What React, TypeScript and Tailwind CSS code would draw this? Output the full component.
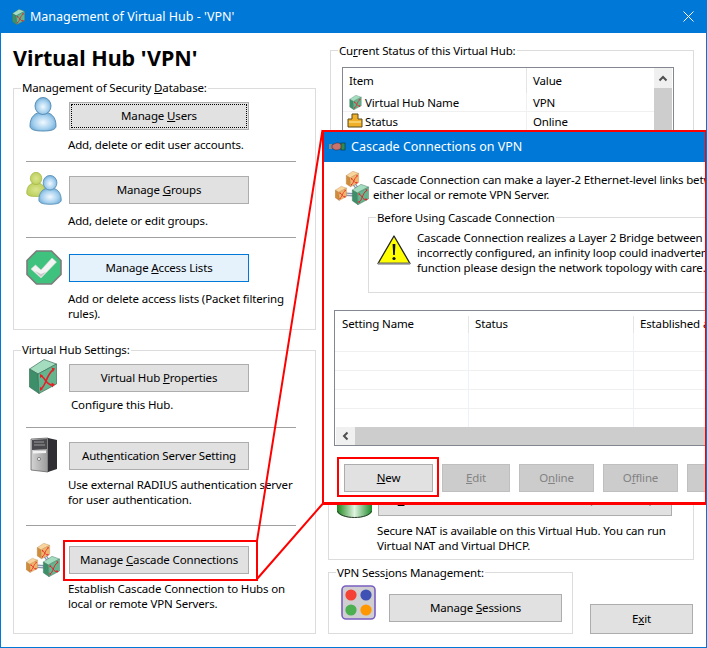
import type { ReactNode } from "react";

function PersonShape({ x = 0, y = 0, s = 1, tone }: { x?: number; y?: number; s?: number; tone: string }) {
  return (
    <g transform={`translate(${x} ${y}) scale(${s})`} fill={`url(#${tone})`} stroke={tone === "pBlue" ? "#5b8fb5" : "#a3b544"} strokeWidth="1">
      <path d="M1 29C1 20 6 15 14 15C22 15 27 20 27 29C27 33 21 34 14 34C7 34 1 33 1 29Z" />
      <ellipse cx="14" cy="9" rx="8" ry="8.5" />
    </g>
  );
}

function PersonDefs() {
  return (
    <defs>
      <radialGradient id="pBlue" cx="50%" cy="55%" r="60%">
        <stop offset="0" stopColor="#f2f9ff" />
        <stop offset="0.6" stopColor="#a5d0ee" />
        <stop offset="1" stopColor="#62a3d3" />
      </radialGradient>
      <radialGradient id="pGreen" cx="50%" cy="50%" r="60%">
        <stop offset="0" stopColor="#dbe68f" />
        <stop offset="1" stopColor="#b7cc55" />
      </radialGradient>
    </defs>
  );
}

function UserIcon() {
  return (
    <svg width="28" height="35" viewBox="0 0 28 35" className="ml-[3px] -mt-[3px]">
      <PersonDefs />
      <PersonShape tone="pBlue" />
    </svg>
  );
}

function GroupIcon() {
  return (
    <svg width="36" height="34" viewBox="0 0 36 34" className="-mt-[3px]">
      <PersonDefs />
      <PersonShape tone="pGreen" x={0} y={0} s={0.72} />
      <PersonShape tone="pBlue" x={12} y={3} s={0.86} />
    </svg>
  );
}

function CheckIcon() {
  return (
    <svg width="36" height="35" viewBox="0 0 36 35" className="-mt-[1px]">
      <path d="M10.5 1H25.5L35 10.5V24.5L25.5 34H10.5L1 24.5V10.5Z" fill="#3fc27e" stroke="#7c7c7c" strokeWidth="1.6" />
      <path d="M5 19L9.5 15L15 20L26 8L30.5 12L15 28Z" fill="#f4f4f4" stroke="#d8d8d8" strokeWidth="0.6" />
      <path d="M9 21L15 27L20 22L15 24Z" fill="#c9c9c9" />
    </svg>
  );
}

function HubBox({ x = 0, y = 0, s = 1, orange = false }: { x?: number; y?: number; s?: number; orange?: boolean }) {
  const top = orange ? "#f9d49c" : "#a4dcbf";
  const side = orange ? "#d08c38" : "#3c8f69";
  const front = orange ? "#f2b468" : "#64b48e";
  const edge = orange ? "#a67c44" : "#40715b";
  return (
    <g transform={`translate(${x} ${y}) scale(${s})`}>
      <path d="M0.5 10L15 0.5L27.5 5L9 15Z" fill={top} stroke={edge} strokeWidth="0.7" strokeLinejoin="round" />
      <path d="M0.5 10L9 15L10 34.5L0.5 28Z" fill={side} stroke={edge} strokeWidth="0.7" strokeLinejoin="round" />
      <path d="M9 15L27.5 5V25L10 34.5Z" fill={front} stroke={edge} strokeWidth="0.7" strokeLinejoin="round" />
      <path d="M11.5 17C16 17 17 27 24 26M11.5 30C17 28 17 16 24 11" fill="none" stroke="#e3202a" strokeWidth="1.6" />
      <path d="M22.5 8.5L26 9.5L24 13ZM22.5 23.5L26 25.5L23 28.5ZM11 15L14 16.5L11 19ZM11 28L14 30L11 32Z" fill="#e3202a" />
    </g>
  );
}

function HubIcon({ w = 28, h = 35 }: { w?: number; h?: number }) {
  return (
    <svg width={w} height={h} viewBox="0 0 28 35" className="shrink-0">
      <HubBox />
    </svg>
  );
}

function CascadeIcon() {
  return (
    <svg width="34" height="35" viewBox="0 0 34 35" className="shrink-0">
      <path d="M17 10L24 20M8 23L21 24" stroke="#8a93ad" strokeWidth="3.4" fill="none" />
      <path d="M17 10L24 20M8 23L21 24" stroke="#e6e9f4" strokeWidth="1.2" fill="none" />
      <HubBox x={11} y={0} s={0.46} orange />
      <HubBox x={0} y={15} s={0.42} orange />
      <HubBox x={17} y={13} s={0.6} />
    </svg>
  );
}

function ServerIcon() {
  return (
    <svg width="28" height="36" viewBox="0 0 28 36" className="ml-[4px] -mt-[3px]">
      <defs>
        <linearGradient id="srvFront" x1="0" y1="0" x2="1" y2="0">
          <stop offset="0" stopColor="#d4d4d4" />
          <stop offset="1" stopColor="#9a9a9a" />
        </linearGradient>
      </defs>
      <path d="M1 2L18 1V35L1 33Z" fill="url(#srvFront)" stroke="#555" strokeWidth="0.7" />
      <path d="M18 1L27 3V32L18 35Z" fill="#2f2f33" />
      <path d="M2 3L17 2V12L2 13Z" fill="#4a4a4e" />
      <path d="M4 5H14M4 8H15" stroke="#9a9a9a" strokeWidth="1" />
      <path d="M3 14L16 13.5V16L3 16.5Z" fill="#f2f2f2" />
      <circle cx="9" cy="22" r="1.6" fill="#eee" stroke="#555" strokeWidth="0.6" />
    </svg>
  );
}

function WarningIcon() {
  return (
    <svg width="34" height="30" viewBox="0 0 34 30" className="mt-[5px] shrink-0">
      <path d="M17 1L33 28.5H1Z" fill="#ffff00" stroke="#222" strokeWidth="1.3" strokeLinejoin="round" />
      <path d="M33 28.5H1" stroke="#888" strokeWidth="1.6" />
      <path d="M15.6 9H18.4L17.8 20H16.2Z" fill="#111" />
      <circle cx="17" cy="23.5" r="1.6" fill="#111" />
    </svg>
  );
}

function HandshakeIcon() {
  return (
    <svg width="17" height="9" viewBox="0 0 17 9" className="shrink-0">
      <rect x="0" y="2" width="3" height="5" fill="#8a8a8a" />
      <path d="M3 3L7 1H10L13 3V6L9 8H6L3 6Z" fill="#c9736f" stroke="#4b2f2f" strokeWidth="0.6" />
      <rect x="12" y="1" width="4" height="7" fill="#2f8a4d" stroke="#123" strokeWidth="0.5" />
    </svg>
  );
}

function StatusIcon() {
  return (
    <svg width="16" height="16" viewBox="0 0 16 16" className="shrink-0">
      <path d="M5 1H11V6H15V14H1V6H5Z" fill="#efb028" stroke="#5c4a18" strokeWidth="1" />
      <path d="M2 9H14" stroke="#fbdc80" strokeWidth="1.4" />
    </svg>
  );
}

function SessionsIcon() {
  return (
    <svg width="35" height="35" viewBox="0 0 35 35" className="shrink-0">
      <rect x="1" y="1" width="33" height="33" rx="4" fill="#cfcfd2" stroke="#7a5ec0" strokeWidth="1.6" />
      <circle cx="10" cy="10" r="5.6" fill="#f44336" />
      <circle cx="25" cy="10" r="5.6" fill="#3f51b5" />
      <circle cx="10" cy="25" r="5.6" fill="#4caf50" />
      <circle cx="25" cy="25" r="5.6" fill="#ff9800" />
    </svg>
  );
}

function CylinderIcon() {
  return (
    <svg width="35" height="30" viewBox="0 0 35 30" className="mt-[4px] shrink-0">
      <defs>
        <linearGradient id="cyl" x1="0" y1="0" x2="1" y2="0">
          <stop offset="0" stopColor="#1e861e" />
          <stop offset="0.5" stopColor="#dff3df" />
          <stop offset="1" stopColor="#1f8a2a" />
        </linearGradient>
      </defs>
      <path d="M0 4H35V23C35 27 26 30 17.5 30C9 30 0 27 0 23Z" fill="url(#cyl)" />
      <path d="M0.5 23C2 27 9 29.5 17.5 29.5C26 29.5 33 27 34.5 23" fill="none" stroke="#2c3a2c" strokeWidth="1" />
    </svg>
  );
}

function Btn({ children, className, focused, hover, disabled }: { children?: ReactNode; className: string; focused?: boolean; hover?: boolean; disabled?: boolean }) {
  const tone = hover
    ? "border-[#0078d7] bg-[#e5f1fb] text-black"
    : disabled
      ? "border-[#bfbfbf] bg-[#cccccc] text-[#838383]"
      : "border-[#adadad] bg-[#e1e1e1] text-black";
  return (
    <div className={`relative flex shrink-0 items-center justify-center border ${tone} ${className}`}>
      {focused && <span className="absolute inset-px border border-dotted border-black" />}
      <span className="-mt-[2px] whitespace-nowrap">{children}</span>
    </div>
  );
}

function Group({ label, className, children, labelClass = "ml-[7px]" }: { label: ReactNode; className: string; children: ReactNode; labelClass?: string }) {
  return (
    <div className={`border border-[#dcdcdc] ${className}`}>
      <div className={`-mt-[9px] h-[16px] w-fit bg-white px-px whitespace-nowrap ${labelClass}`}>{label}</div>
      {children}
    </div>
  );
}

function ActionRow({ icon, label, className, focused, hover }: { icon: ReactNode; label: ReactNode; className: string; focused?: boolean; hover?: boolean }) {
  return (
    <div className={`flex h-[28px] items-center pl-[12px] ${className}`}>
      <div className="flex h-[28px] w-[43px] shrink-0 items-center">{icon}</div>
      <Btn className="h-[28px] w-[180px]" focused={focused} hover={hover}>
        {label}
      </Btn>
    </div>
  );
}

function Sep({ className }: { className: string }) {
  return <div className={`ml-[12px] h-px w-[270px] bg-[#a0a0a0] ${className}`} />;
}

function Desc({ children, className }: { children: ReactNode; className: string }) {
  return <div className={`ml-[54px] w-[235px] ${className}`}>{children}</div>;
}

function CascadeWindow() {
  return (
    <div className="absolute left-[321px] top-[130px] h-[375px] w-[385px] overflow-hidden border-x-2 border-t-2 border-b-[3px] border-[#ff0000] bg-white">
      <div className="flex h-[30px] items-center gap-[5px] bg-[#0078d7] pb-[2px] pl-[5px] text-[12.5px] tracking-normal text-white">
        <HandshakeIcon />
        <span className="whitespace-nowrap">Cascade Connections on VPN</span>
      </div>

      <div className="mt-[10px] flex h-[31px] pl-[11px]">
        <div className="-mt-[1px] w-[38px] shrink-0">
          <CascadeIcon />
        </div>
        <div className="whitespace-nowrap">
          <div>Cascade Connection can make a layer-2 Ethernet-level links between Virtual Hubs on</div>
          <div>either local or remote VPN Server.</div>
        </div>
      </div>

      <Group labelClass="ml-[7px] pt-px" label="Before Using Cascade Connection" className="mt-[14px] ml-[44px] h-[76px] w-[520px]">
        <div className="mt-[5px] flex gap-[6px] pl-[8px]">
          <WarningIcon />
          <div className="whitespace-nowrap">
            <div>Cascade Connection realizes a Layer 2 Bridge between multiple Virtual Hubs. If it is</div>
            <div>incorrectly configured, an infinity loop could inadvertently be created. When using this</div>
            <div>function please design the network topology with care.</div>
          </div>
        </div>
      </Group>

      <div className="mt-[17px] ml-[10px] h-[136px] w-[600px] border border-[#828790]">
        <div className="flex h-[22px] pt-[5px]">
          <div className="w-[134px] border-r border-[#e5e5e5] pl-[7px]">Setting Name</div>
          <div className="w-[165px] border-r border-[#e5e5e5] pl-[6px]">Status</div>
          <div className="pl-[6px] whitespace-nowrap">Established at</div>
        </div>
        {[0, 1, 2, 3].map((n) => (
          <div key={n} className="flex h-[19px] border-b border-[#f0f0f0]">
            <div className="w-[134px] border-r border-[#edf1fb]" />
            <div className="w-[165px] border-r border-[#edf1fb]" />
          </div>
        ))}
        <div className="flex h-[18px]">
          <div className="w-[134px] border-r border-[#edf1fb]" />
          <div className="w-[165px] border-r border-[#edf1fb]" />
        </div>
        <div className="flex h-[18px] pl-px">
          <div className="flex w-[19px] items-center justify-center bg-[#f0f0f0]">
            <svg width="7" height="10" viewBox="0 0 7 10">
              <path d="M5.5 1.5L2 5L5.5 8.5" fill="none" stroke="#505050" strokeWidth="2" />
            </svg>
          </div>
          <div className="flex-1 bg-[#cdcdcd]" />
        </div>
      </div>

      <div className="mt-[18px] ml-[20px] flex gap-[9px]">
        <Btn className="h-[28px] w-[89px]">
          <u>N</u>ew
        </Btn>
        <Btn disabled className="h-[28px] w-[68px]">
          <u>E</u>dit
        </Btn>
        <Btn disabled className="h-[28px] w-[75px]">
          O<u>n</u>line
        </Btn>
        <Btn disabled className="h-[28px] w-[75px]">
          O<u>f</u>fline
        </Btn>
        <Btn disabled className="h-[28px] w-[75px]" />
      </div>
    </div>
  );
}

export default function App() {
  return (
    <div className="relative h-[648px] w-[707px] overflow-hidden border border-t-0 border-[#0078d7] bg-white font-['Noto_Sans',sans-serif] text-[11.5px] leading-[15px] tracking-[-0.15px] text-black">
      <div className="flex h-[33px] items-center bg-[#0078d7] pl-[11px] text-[12.5px] tracking-normal text-white">
        <HubIcon w={13} h={16} />
        <span className="ml-[5px]">Management of Virtual Hub - &#39;VPN&#39;</span>
        <svg width="11" height="11" viewBox="0 0 11 11" className="mr-[12px] ml-auto">
          <path d="M0.5 0.5L10.5 10.5M10.5 0.5L0.5 10.5" stroke="#fff" strokeWidth="1" />
        </svg>
      </div>

      <div className="flex">
        <div className="ml-[12px] w-[303px]">
          <h1 className="h-[55px] pt-[11px] text-[21.5px] leading-[28px] font-bold tracking-normal">Virtual Hub &#39;VPN&#39;</h1>

          <Group
            className="h-[242px]"
            label={
              <>
                Management of Security <u>D</u>atabase:
              </>
            }
          >
            <ActionRow
              className="mt-[6px]"
              focused
              icon={<UserIcon />}
              label={
                <>
                  Manage <u>U</u>sers
                </>
              }
            />
            <Desc className="mt-[7px]">Add, delete or edit user accounts.</Desc>
            <Sep className="mt-[9px]" />
            <ActionRow
              className="mt-[14px]"
              icon={<GroupIcon />}
              label={
                <>
                  Manage <u>G</u>roups
                </>
              }
            />
            <Desc className="mt-[9px]">Add, delete or edit groups.</Desc>
            <Sep className="mt-[9px]" />
            <ActionRow
              className="mt-[16px]"
              hover
              icon={<CheckIcon />}
              label={
                <>
                  Manage <u>A</u>ccess Lists
                </>
              }
            />
            <Desc className="mt-[9px]">Add or delete access lists (Packet filtering rules).</Desc>
          </Group>

          <Group className="mt-[20px] h-[284px]" label="Virtual Hub Settings:">
            <ActionRow
              className="mt-[6px]"
              icon={
                <div className="ml-[3px] -mt-[3px]">
                  <HubIcon />
                </div>
              }
              label={
                <>
                  Virtual Hub <u>P</u>roperties
                </>
              }
            />
            <Desc className="mt-[5px] pl-[3px]">Configure this Hub.</Desc>
            <Sep className="mt-[15px]" />
            <ActionRow
              className="mt-[14px]"
              icon={<ServerIcon />}
              label={
                <>
                  Auth<u>e</u>ntication Server Setting
                </>
              }
            />
            <Desc className="mt-[7px]">Use external RADIUS authentication server for user authentication.</Desc>
            <Sep className="mt-[18px]" />
            <ActionRow
              className="mt-[20px]"
              icon={<CascadeIcon />}
              label={
                <>
                  Manage <u>C</u>ascade Connections
                </>
              }
            />
            <Desc className="mt-[7px]">Establish Cascade Connection to Hubs on local or remote VPN Servers.</Desc>
          </Group>
        </div>

        <div className="ml-[12px] w-[366px]">
          <Group
            className="mt-[17px] ml-[2px] h-[250px]"
            labelClass="ml-[7px] pt-px"
            label={
              <>
                Cu<u>r</u>rent Status of this Virtual Hub:
              </>
            }
          >
            <div className="mt-[9px] ml-[11px] h-[200px] w-[332px] overflow-hidden border border-[#828790]">
              <div className="flex h-full">
                <div className="w-[311px]">
                  <div className="flex h-[25px] items-center">
                    <div className="w-[184px] border-r border-[#e5e5e5] pl-[6px] leading-[25px]">Item</div>
                    <div className="pl-[6px]">Value</div>
                  </div>
                  <div className="flex h-[19px] border-b border-[#f0f0f0]">
                    <div className="flex w-[184px] items-center gap-[3px] border-r border-[#f0f0f0] pl-[6px]">
                      <HubIcon w={13} h={15} />
                      Virtual Hub Name
                    </div>
                    <div className="flex items-center pl-[6px]">VPN</div>
                  </div>
                  <div className="flex h-[19px] border-b border-[#f0f0f0]">
                    <div className="flex w-[184px] items-center gap-[2px] border-r border-[#f0f0f0] pl-[4px]">
                      <StatusIcon />
                      Status
                    </div>
                    <div className="flex items-center pl-[6px]">Online</div>
                  </div>
                </div>
                <div className="w-[18px] bg-[#cdcdcd]">
                  <div className="flex h-[20px] items-center justify-center bg-[#f0f0f0]">
                    <svg width="10" height="7" viewBox="0 0 10 7">
                      <path d="M1.5 5.5L5 2L8.5 5.5" fill="none" stroke="#505050" strokeWidth="2" />
                    </svg>
                  </div>
                </div>
              </div>
            </div>
          </Group>

          <Group className="mt-[10px] h-[250px]" label="Virtual NAT and Virtual DHCP Server:">
            <div className="mt-[166px] flex h-[32px] items-start gap-[6px] pl-[8px]">
              <CylinderIcon />
              <Btn className="h-[32px] w-[294px]">
                <u>V</u>irtual NAT and Virtual DHCP Server (SecureNAT)
              </Btn>
            </div>
            <div className="mt-[7px] ml-[48px]">
              Secure NAT is available on this Virtual Hub. You can run
              <br />
              Virtual NAT and Virtual DHCP.
            </div>
          </Group>

          <div className="mt-[12px] flex items-start">
            <Group
              className="h-[62px] w-[245px] shrink-0"
              labelClass="ml-[7px] pt-px"
              label={
                <>
                  VPN Sess<u>i</u>ons Management:
                </>
              }
            >
              <div className="mt-[5px] flex gap-[13px] pl-[12px]">
                <SessionsIcon />
                <Btn className="mt-[9px] h-[28px] w-[173px]">
                  Manage <u>S</u>essions
                </Btn>
              </div>
            </Group>
            <Btn className="mt-[32px] ml-[17px] h-[30px] w-[103px]">
              E<u>x</u>it
            </Btn>
          </div>
        </div>
      </div>

      <CascadeWindow />

      {/* red callout drawn over the dialogs */}
      <div className="pointer-events-none absolute left-[62px] top-[540px] h-[41px] w-[195px] border-2 border-[#ff0000]" />
      <div className="pointer-events-none absolute left-[336px] top-[457px] h-[40px] w-[102px] border-2 border-[#ff0000]" />
      <svg width="707" height="648" viewBox="0 0 707 648" className="pointer-events-none absolute -left-px top-0">
        <path d="M257 541L322.5 130M257 579L322.5 504" fill="none" stroke="#ff0000" strokeWidth="2" />
      </svg>
    </div>
  );
}
